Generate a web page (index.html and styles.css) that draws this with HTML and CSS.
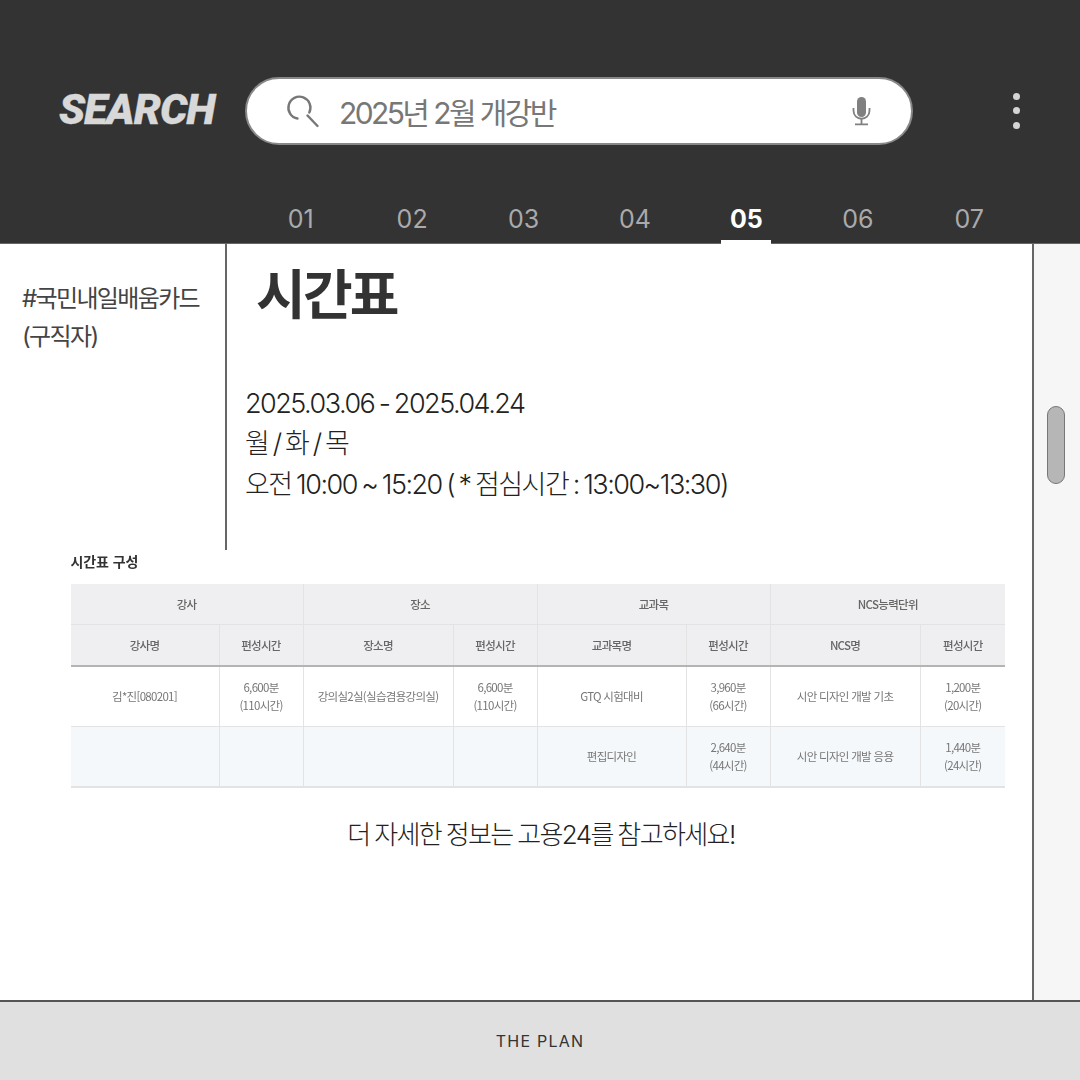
FILE: index.html
```html
<!DOCTYPE html>
<html lang="ko">
<head>
<meta charset="utf-8">
<title>SEARCH</title>
<link rel="stylesheet" href="styles.css">
</head>
<body>
<div class="page">
  <header class="header">
    <div class="search-row">
      <div class="logo">SEARCH</div>
      <div class="search-box">
        <svg class="icon-search" width="34" height="34" viewBox="0 0 34 34" fill="none" stroke="#777" stroke-width="2.4" stroke-linecap="round">
          <path d="M11.5 24.5 A11 11 0 1 1 23.3 18.5"/>
          <path d="M21.5 21.5 L31.5 32"/>
        </svg>
        <span class="search-text">2025년 2월 개강반</span>
        <svg class="icon-mic" width="22" height="30" viewBox="0 0 22 30" fill="none" stroke="#808080" stroke-width="1.8">
          <rect x="6" y="1" width="9" height="20" rx="4.5" fill="#808080" stroke="none"/>
          <path d="M2.5 12 V14.5 C2.5 25.5 18.5 25.5 18.5 14.5 V12"/>
          <path d="M10.5 23 V28 M4 28.3 H17"/>
        </svg>
      </div>
      <div class="more"><i></i><i></i><i></i></div>
    </div>
    <nav class="tabs">
      <a class="tab">01</a>
      <a class="tab">02</a>
      <a class="tab">03</a>
      <a class="tab">04</a>
      <a class="tab active">05</a>
      <a class="tab">06</a>
      <a class="tab">07</a>
    </nav>
  </header>
  <main class="main">
    <div class="content">
      <div class="top">
        <aside class="aside">#국민내일배움카드<br>(구직자)</aside>
        <section class="info">
          <h1 class="title">시간표</h1>
          <p class="details">2025.03.06 - 2025.04.24<br>월 / 화 / 목<br>오전 10:00 ~ 15:20 ( * 점심시간 : 13:00~13:30)</p>
        </section>
      </div>
      <div class="schedule">
        <h2 class="table-title">시간표 구성</h2>
        <table class="table">
          <colgroup>
            <col class="c1"><col class="c2"><col class="c3"><col class="c4">
            <col class="c5"><col class="c6"><col class="c7"><col class="c8">
          </colgroup>
          <thead>
            <tr class="h1"><th colspan="2">강사</th><th colspan="2">장소</th><th colspan="2">교과목</th><th colspan="2">NCS능력단위</th></tr>
            <tr class="h2"><th>강사명</th><th>편성시간</th><th>장소명</th><th>편성시간</th><th>교과목명</th><th>편성시간</th><th>NCS명</th><th>편성시간</th></tr>
          </thead>
          <tbody>
            <tr class="r1"><td>김*진[080201]</td><td>6,600분<br>(110시간)</td><td>강의실2실(실습겸용강의실)</td><td>6,600분<br>(110시간)</td><td>GTQ 시험대비</td><td>3,960분<br>(66시간)</td><td>시안 디자인 개발 기초</td><td>1,200분<br>(20시간)</td></tr>
            <tr class="r2"><td></td><td></td><td></td><td></td><td>편집디자인</td><td>2,640분<br>(44시간)</td><td>시안 디자인 개발 응용</td><td>1,440분<br>(24시간)</td></tr>
          </tbody>
        </table>
      </div>
      <p class="note">더 자세한 정보는 고용24를 참고하세요!</p>
    </div>
    <div class="scrollbar"><div class="thumb"></div></div>
  </main>
  <footer class="footer">THE PLAN</footer>
</div>
</body>
</html>
```
FILE: styles.css
```css
* { box-sizing: border-box; }
html, body { margin: 0; padding: 0; }
body {
  width: 1080px;
  height: 1080px;
  overflow: hidden;
  background: #fff;
  color: #333;
  font-family: Inter, "Noto Sans CJK KR", sans-serif;
}
.page { display: flex; flex-direction: column; height: 1080px; }

.header {
  height: 244px;
  background: #333;
  border-bottom: 1px solid #666;
  display: flex;
  flex-direction: column;
}
.search-row {
  display: flex;
  align-items: center;
  height: 67px;
  margin-top: 77px;
  padding-left: 59px;
}
.logo {
  width: 186px;
  margin-bottom: 4px;
  font-family: Roboto, sans-serif;
  font-weight: 900;
  font-style: italic;
  font-size: 43px;
  letter-spacing: -1.05px;
  -webkit-text-stroke: 0.3px #d8d8d8;
  color: #d8d8d8;
}
.search-box {
  width: 668px;
  height: 68px;
  border: 2px solid #888;
  border-radius: 34px;
  background: #fff;
  display: flex;
  align-items: center;
  padding-left: 38.5px;
  padding-right: 38.5px;
}
.icon-search { flex: none; }
.search-text {
  flex: 1;
  margin-left: 19.5px;
  font-size: 30px;
  letter-spacing: -2.6px;
  color: #777;
}
.icon-mic { flex: none; }
.more {
  display: flex;
  flex-direction: column;
  gap: 7.5px;
  margin-left: 100px;
}
.more i { display: block; width: 7px; height: 7px; border-radius: 50%; background: #d4d4d4; }

.tabs {
  display: flex;
  margin-top: auto;
  padding-left: 245px;
  width: 1025px;
}
.tab {
  flex: 1;
  height: 51px;
  padding-top: 8px;
  margin-bottom: -1px;
  text-align: center;
  font-size: 25px;
  line-height: 36px;
  color: #aaa;
  position: relative;
}
.tab.active { color: #fff; font-weight: 700; }
.tab.active::after {
  content: "";
  position: absolute;
  left: 30px;
  width: 50px;
  bottom: 0;
  height: 4px;
  background: #fff;
}

.main { flex: 1; display: flex; min-height: 0; }
.content { width: 1034px; border-right: 2px solid #666; }
.top { display: flex; height: 306px; }
.aside {
  width: 227px;
  border-right: 2px solid #666;
  padding: 36px 0 0 22px;
  font-size: 24px;
  line-height: 38px;
  letter-spacing: -1.65px;
  color: #444;
}
.info { flex: 1; padding-left: 18px; }
.title {
  margin: 16px 0 0 11px;
  font-size: 54px;
  line-height: 72px;
  font-weight: 600;
  letter-spacing: -2.8px;
  color: #333;
}
.details {
  margin: 52px 0 0;
  font-size: 27px;
  font-weight: 300;
  line-height: 40.4px;
  letter-spacing: -1.5px;
  word-spacing: -1.7px;
  color: #222;
}

.schedule { padding: 0 27px 0 70.5px; }
.table-title {
  margin: 0;
  height: 34px;
  font-family: "Noto Sans CJK KR", sans-serif;
  font-size: 14px;
  line-height: 22px;
  font-weight: 700;
  letter-spacing: -0.1px;
  color: #333;
  filter: blur(0.3px);
}
.table {
  width: 934.5px;
  border-collapse: collapse;
  table-layout: fixed;
  font-family: "Noto Sans CJK KR", sans-serif;
  font-size: 11.5px;
  line-height: 18px;
  letter-spacing: -0.7px;
  color: #777;
  text-align: center;
  filter: blur(0.4px);
}
.c1 { width: 148.5px; } .c2 { width: 84px; } .c3 { width: 150px; } .c4 { width: 84px; }
.c5 { width: 149px; } .c6 { width: 84px; } .c7 { width: 150px; } .c8 { width: 85px; }
.table th, .table td { padding: 0; border-left: 1px solid #e3e3e3; border-bottom: 1px solid #e3e3e3; }
.table th:first-child, .table td:first-child { border-left: 0; }
.table th { background: #efeff1; font-weight: 500; color: #666; }
.h1 { height: 40px; }
.h2 { height: 42px; }
.h2 th { border-bottom: 2px solid #b4b4b4; }
.r1 { height: 60px; }
.r2 { height: 61px; background: #f5f8fb; }
.r2 td { border-bottom: 2px solid #e3e3e3; }

.note {
  margin: 30px 0 0;
  padding-left: 50px;
  text-align: center;
  font-size: 26px;
  font-weight: 300;
  line-height: 34px;
  letter-spacing: -1.6px;
  word-spacing: -1.2px;
  color: #222;
}

.scrollbar { flex: 1; background: #f6f6f6; padding: 162px 0 0 13px; }
.thumb {
  width: 17.5px;
  height: 78px;
  border: 1.5px solid #777;
  border-radius: 9px;
  background: #b6b6b6;
}

.footer {
  height: 80px;
  background: #e0e0e0;
  border-top: 2px solid #555;
  display: flex;
  align-items: center;
  justify-content: center;
  font-size: 16px;
  letter-spacing: 1.2px;
  color: #333;
}
```
